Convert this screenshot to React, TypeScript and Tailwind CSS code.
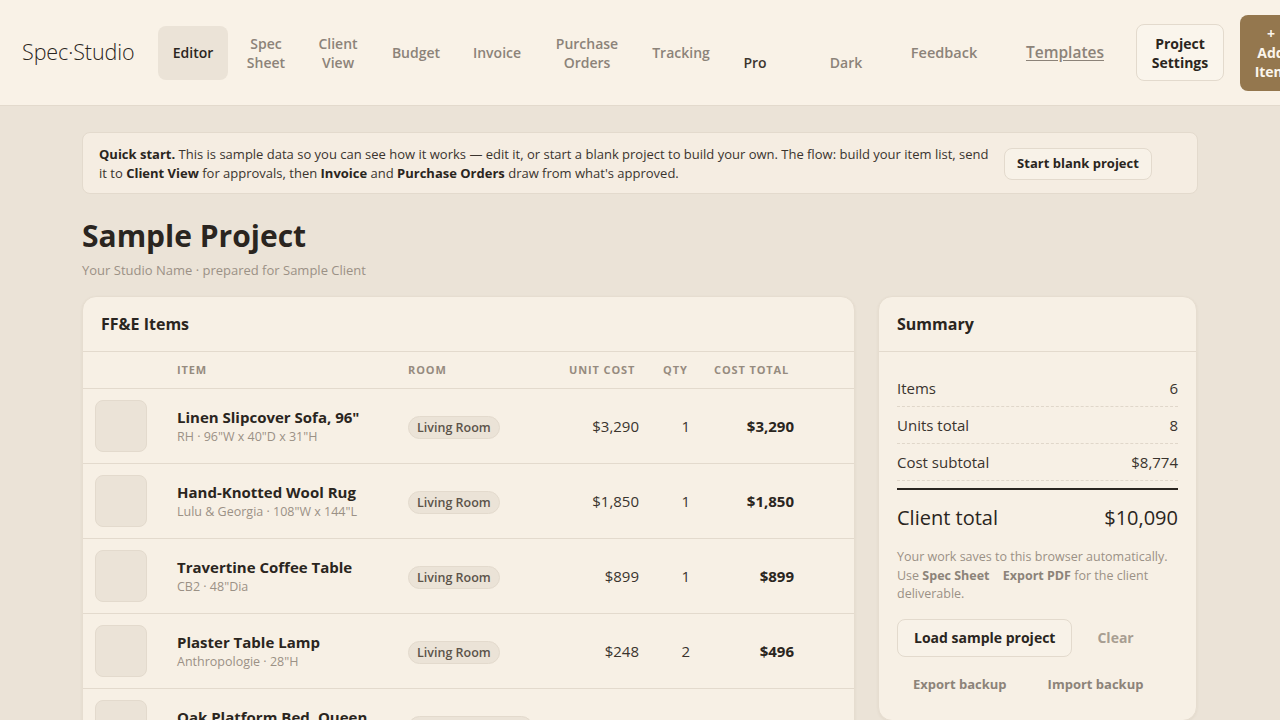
import React from "react";

const items = [
  { name: 'Linen Slipcover Sofa, 96"', sub: 'RH · 96"W x 40"D x 31"H', room: "Living Room", unit: "$3,290", qty: 1, total: "$3,290" },
  { name: "Hand-Knotted Wool Rug", sub: 'Lulu & Georgia · 108"W x 144"L', room: "Living Room", unit: "$1,850", qty: 1, total: "$1,850" },
  { name: "Travertine Coffee Table", sub: 'CB2 · 48"Dia', room: "Living Room", unit: "$899", qty: 1, total: "$899" },
  { name: "Plaster Table Lamp", sub: 'Anthropologie · 28"H', room: "Living Room", unit: "$248", qty: 2, total: "$496" },
  { name: "Oak Platform Bed, Queen", sub: 'Room & Board · 64"W x 86"L', room: "Primary Bedroom", unit: "$1,695", qty: 1, total: "$1,695" },
  { name: "Linen Nightstand", sub: 'Serena & Lily · 24"W', room: "Primary Bedroom", unit: "$272", qty: 2, total: "$544" },
];

const navGray = "text-[#8c8379]";

export default function App() {
  return (
    <div className="min-h-screen bg-[#ebe3d7] text-[#2a2520]" style={{ fontFamily: '"Open Sans", "Noto Sans", sans-serif' }}>
      <header className="h-[106px] bg-[#f9f2e7] border-b border-[#e3dacd] flex items-center overflow-hidden whitespace-nowrap">
        <div className="ml-[22px] w-[112px] flex-none text-[21.5px] font-light tracking-[-0.1px] text-[#2a2520]">Spec·Studio</div>
        <nav className="flex items-center flex-none text-[14px] font-semibold leading-[19px]">
          <div className="ml-[24px] w-[70px] h-[54px] rounded-lg bg-[#ebe3d7] flex items-center justify-center text-[#2a2520]">Editor</div>
          <div className={`ml-[5px] w-[66px] text-center ${navGray}`}>Spec<br />Sheet</div>
          <div className={`ml-[5px] w-[68px] text-center ${navGray}`}>Client<br />View</div>
          <div className={`ml-[5px] w-[78px] text-center ${navGray}`}>Budget</div>
          <div className={`ml-[3px] w-[78px] text-center ${navGray}`}>Invoice</div>
          <div className={`ml-[5px] w-[92px] text-center ${navGray}`}>Purchase<br />Orders</div>
          <div className={`ml-[3px] w-[90px] text-center ${navGray}`}>Tracking</div>
          <div className="ml-[3px] w-[52px] text-center pt-[19px] text-[#3d362f]">Pro</div>
          <div className={`ml-[5px] w-[120px] text-center pt-[19px] ${navGray}`}>Dark</div>
          <div className={`ml-[3px] w-[70px] text-center text-[14.5px] ${navGray}`}>Feedback</div>
          <div className={`ml-[33px] w-[106px] text-center text-[15.5px] underline underline-offset-2 ${navGray}`}>Templates</div>
          <div className="ml-[18px] w-[88px] h-[57px] rounded-lg border border-[#e3dacd] bg-[#faf5ec] flex items-center justify-center text-center font-bold text-[#2a2520]">Project<br />Settings</div>
          <div className="ml-[16px] w-[62px] h-[76px] rounded-lg bg-[#94774e] flex items-center justify-center text-center font-bold text-[#fbf5ec]">+<br />Add<br />Item</div>
        </nav>
      </header>

      <main className="w-[1116px] mx-auto pt-[26px] pb-10">
        <div className="rounded-lg border border-[#e3dacd] bg-[#f5ede2] px-4 pt-[12px] pb-[10px] flex items-center gap-[15px]">
          <p className="w-[890px] text-[13px] leading-[19px] text-[#3a342e]">
            <b className="text-[#2a2520]">Quick start.</b> This is sample data so you can see how it works — edit it, or start a blank project to build your own. The flow: build your item list, send it to <b className="text-[#2a2520]">Client View</b> for approvals, then <b className="text-[#2a2520]">Invoice</b> and <b className="text-[#2a2520]">Purchase Orders</b> draw from what's approved.
          </p>
          <button className="h-[32px] w-[148px] rounded-lg border border-[#e3dacd] bg-[#f8f2e8] text-[13px] font-bold text-[#2a2520]">Start blank project</button>
        </div>

        <h1 className="mt-[22px] text-[30px] font-bold leading-[40px] text-[#2a2520]">Sample Project</h1>
        <p className="mt-[5px] text-[13px] leading-[18px] text-[#9b9186]">Your Studio Name · prepared for Sample Client</p>

        <div className="mt-[17px] flex gap-[23px] items-start">
          <section className="w-[773px] rounded-[14px] border border-[#e6ddd0] bg-[#f7f0e5] shadow-[0_1px_3px_rgba(80,60,30,0.06)] overflow-hidden">
            <div className="h-[55px] px-[18px] flex items-center border-b border-[#e3dacd]">
              <h2 className="text-[16px] font-bold text-[#2a2520]">FF&amp;E Items</h2>
            </div>
            <div className="grid grid-cols-[82px_231px_161px_94px_51px_104px_1fr] h-[37px] items-center border-b border-[#e3dacd] text-[11px] font-bold uppercase tracking-[0.08em] text-[#968b7f]">
              <div />
              <div className="px-3">Item</div>
              <div className="px-3">Room</div>
              <div className="px-3">Unit Cost</div>
              <div className="px-3">Qty</div>
              <div className="px-3">Cost Total</div>
              <div />
            </div>
            {items.map((it) => (
              <div key={it.name} className="grid grid-cols-[82px_231px_161px_94px_51px_104px_1fr] h-[75px] items-center border-b border-[#e3dacd]">
                <div className="pl-3">
                  <div className="w-[52px] h-[52px] rounded-lg bg-[#ebe3d7] border border-[#e3dacd]" />
                </div>
                <div className="px-3 pt-[2px]">
                  <div className="text-[15px] font-bold leading-[20px] text-[#2a2520] whitespace-nowrap">{it.name}</div>
                  <div className="text-[12.5px] leading-[20px] text-[#9b9186] whitespace-nowrap">{it.sub}</div>
                </div>
                <div className="px-3">
                  <span className="inline-block rounded-full border border-[#e3dacd] bg-[#ebe3d7] px-[8px] py-[2px] text-[12.5px] font-semibold leading-[17px] text-[#5c534a] whitespace-nowrap">{it.room}</span>
                </div>
                <div className="px-3 text-right text-[15px] text-[#3a342e]">{it.unit}</div>
                <div className="px-3 text-right text-[15px] text-[#3a342e]">{it.qty}</div>
                <div className="px-3 text-right text-[15px] font-bold text-[#2a2520]">{it.total}</div>
                <div />
              </div>
            ))}
          </section>

          <aside className="w-[319px] rounded-[14px] border border-[#e6ddd0] bg-[#f7f0e5] shadow-[0_1px_3px_rgba(80,60,30,0.06)]">
            <div className="h-[55px] px-[18px] flex items-center border-b border-[#e3dacd]">
              <h2 className="text-[16px] font-bold text-[#2a2520]">Summary</h2>
            </div>
            <div className="px-[18px] pt-[18px] pb-[16px]">
              {[["Items", "6"], ["Units total", "8"], ["Cost subtotal", "$8,774"]].map(([k, v]) => (
                <div key={k} className="h-[37px] flex items-center justify-between border-b border-dashed border-[#e0d7ca] text-[15px] text-[#3a342e]">
                  <span>{k}</span>
                  <span>{v}</span>
                </div>
              ))}
              <div className="mt-[7px] border-t-2 border-[#2a2520] pt-[13px] flex items-center justify-between text-[20px] leading-[30px] text-[#2a2520]">
                <span>Client total</span>
                <span>$10,090</span>
              </div>
              <p className="mt-[15px] text-[12.5px] leading-[18.5px] text-[#9b9186]">
                Your work saves to this browser automatically. Use <b className="text-[#8c8379]">Spec Sheet</b> <span className="inline-block w-[10px]" /><b className="text-[#8c8379]">Export PDF</b> for the client deliverable.
              </p>
              <div className="mt-[15px] flex flex-wrap gap-[9px]">
                <button className="h-[38px] px-4 rounded-lg border border-[#e3dacd] bg-[#f8f2e8] text-[14px] font-bold text-[#2a2520]">Load sample project</button>
                <button className="h-[38px] px-4 text-[14px] font-bold text-[#a89e92]">Clear</button>
                <button className="h-[38px] px-4 text-[13px] font-bold text-[#8c8379]">Export backup</button>
                <button className="h-[38px] px-4 text-[13px] font-bold text-[#8c8379]">Import backup</button>
              </div>
            </div>
          </aside>
        </div>
      </main>
    </div>
  );
}
